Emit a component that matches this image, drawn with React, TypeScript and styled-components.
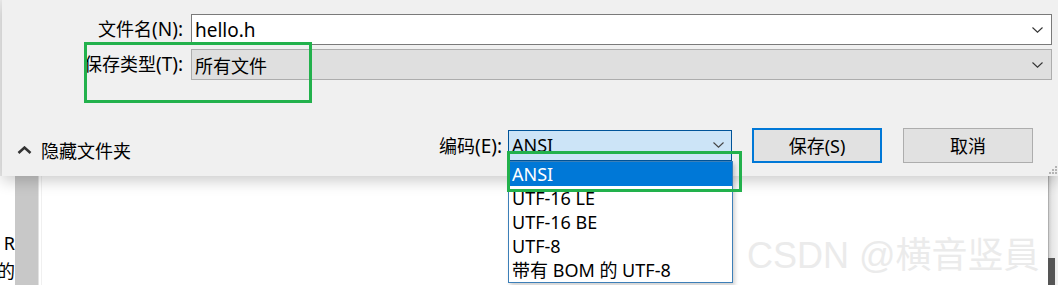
import React from 'react'
import styled, { createGlobalStyle } from 'styled-components'

// ---------- data ----------

const ENCODINGS = ['ANSI', 'UTF-16 LE', 'UTF-16 BE', 'UTF-8', '带有 BOM 的 UTF-8']

// ---------- global ----------

const GlobalStyle = createGlobalStyle`
  html, body { margin: 0; padding: 0; background: #ffffff; }
  body {
    font-family: "Noto Sans", "Noto Sans CJK SC", sans-serif;
    color: #000;
  }
  * { box-sizing: border-box; }
`

// ---------- layout ----------

const Screen = styled.div`
  position: relative;
  width: 1058px;
  height: 285px;
  overflow: hidden;
  background: #ebebeb;
  display: flex;
  flex-direction: column;
`

const Dialog = styled.div`
  position: relative;
  z-index: 2;
  margin-left: 2px;
  height: 183px;
  background: #f0f0f0;
  box-shadow: 0 5px 14px rgba(0, 0, 0, 0.2);
  padding: 14px 6px 0 0;
  display: flex;
  flex-direction: column;
`

const FieldGrid = styled.div`
  display: grid;
  grid-template-columns: 181px 1fr;
  column-gap: 8px;
  row-gap: 4px;
`

const Label = styled.label`
  font-size: 18px;
  line-height: 31px;
  text-align: right;
  white-space: nowrap;
`

// Latin runs render a touch larger than the CJK glyphs, as in YaHei UI
const Latin = styled.span`
  font-size: 19px;
`

const Combo = styled.div<{ $readonly?: boolean }>`
  height: 31px;
  display: flex;
  align-items: center;
  justify-content: space-between;
  padding: 0 8px 0 3px;
  font-size: 18px;
  background: ${(p) => (p.$readonly ? '#dfdfdf' : '#ffffff')};
  border: 1px solid ${(p) => (p.$readonly ? '#adadad' : '#7a7a7a')};
`

const BottomBar = styled.div`
  margin-top: 47px;
  display: flex;
  align-items: center;
  padding-right: 19px;
`

const HideToggle = styled.div`
  display: flex;
  align-items: center;
  gap: 9px;
  padding-left: 15px;
  margin-top: 10px;
  font-size: 18px;
`

const EncodingGroup = styled.div`
  margin-left: auto;
  display: flex;
  align-items: center;
  gap: 6px;
`

const EncodingLabel = styled.span`
  font-size: 18px;
`

const EncodingSelect = styled.div`
  position: relative;
  width: 224px;
  height: 31px;
  display: flex;
  align-items: center;
  justify-content: space-between;
  padding: 0 7px 0 3px;
  font-size: 18px;
  background: #cce4f7;
  border: 1px solid #005499;
`

const Buttons = styled.div`
  display: flex;
  gap: 21px;
  margin-left: 20px;
`

const Button = styled.button<{ $primary?: boolean }>`
  width: 130px;
  height: 35px;
  font-family: inherit;
  font-size: 18px;
  color: #000;
  background: #e1e1e1;
  border: ${(p) => (p.$primary ? '2px solid #0078d7' : '1px solid #adadad')};
  padding: 0;
`

// dropdown list hangs over the dialog edge
const DropList = styled.ul`
  position: absolute;
  left: -1px;
  top: 30px;
  width: 225px;
  margin: 0;
  padding: 0;
  list-style: none;
  background: #fff;
  border: 1px solid #3c7fb8;
  box-shadow: 2px 3px 4px rgba(0, 0, 0, 0.18);
`

const DropItem = styled.li<{ $active?: boolean }>`
  height: 24px;
  line-height: 24px;
  padding-left: 3px;
  font-size: 18px;
  white-space: nowrap;
  color: ${(p) => (p.$active ? '#fff' : '#000')};
  background: ${(p) => (p.$active ? '#0078d7' : 'transparent')};
`

const Grip = styled.svg`
  position: absolute;
  right: 0;
  bottom: 1px;
`

// ---------- background window ----------

const Backdrop = styled.div`
  flex: 1;
  display: flex;
  background: #fff;
`

const EdgeText = styled.div`
  width: 15px;
  overflow: hidden;
  padding-top: 53px;
  font-size: 18px;
  line-height: 28px;
  white-space: nowrap;
  direction: rtl;
`

const GutterBar = styled.div`
  width: 24px;
  background: #c8c8c8;
  border-right: 1px solid #e2e2e2;
`

const Page = styled.div`
  flex: 1;
  border-left: 1px solid #f0f0f0;
  margin-left: 2px;
`

const RightRail = styled.div`
  width: 10px;
  display: flex;
  flex-direction: column;
  background: linear-gradient(to right, #8e8e8e 0, #cfcfcf 1px, #e6e6e6 4px, #f2f2f2 100%);

  &::after {
    content: '';
    margin-top: auto;
    height: 27px;
    width: 7px;
    background: #555;
  }
`

// ---------- overlays ----------

const Highlight = styled.div<{ $x: number; $y: number; $w: number; $h: number }>`
  position: absolute;
  z-index: 5;
  left: ${(p) => p.$x}px;
  top: ${(p) => p.$y}px;
  width: ${(p) => p.$w}px;
  height: ${(p) => p.$h}px;
  border: 3px solid #22b14c;
`

const Watermark = styled.div`
  position: absolute;
  z-index: 1;
  left: 747px;
  top: 236px;
  font-family: "Liberation Sans", "Noto Sans CJK SC", sans-serif;
  font-size: 36px;
  line-height: 40px;
  color: #ebebeb;
  white-space: nowrap;
`

// ---------- icons ----------

const ChevronDown = ({ color = '#333' }: { color?: string }) => (
  <svg width="11" height="6" viewBox="0 0 11 6">
    <path d="M0.5 0.5 L5.5 5.2 L10.5 0.5" fill="none" stroke={color} strokeWidth="1.1" />
  </svg>
)

const ChevronUp = () => (
  <svg width="15" height="8" viewBox="0 0 15 8">
    <path d="M1.5 7 L7.5 1.6 L13.5 7" fill="none" stroke="#333" strokeWidth="2.6" />
  </svg>
)

export default function App() {
  return (
    <Screen>
      <GlobalStyle />
      <Dialog>
        <FieldGrid>
          <Label>
            文件名<Latin>(N):</Latin>
          </Label>
          <Combo>
            <Latin>hello.h</Latin>
            <ChevronDown />
          </Combo>
          <Label>
            保存类型<Latin>(T):</Latin>
          </Label>
          <Combo $readonly>
            <span>所有文件</span>
            <ChevronDown />
          </Combo>
        </FieldGrid>

        <BottomBar>
          <HideToggle>
            <ChevronUp />
            <span>隐藏文件夹</span>
          </HideToggle>
          <EncodingGroup>
            <EncodingLabel>
              编码<Latin>(E):</Latin>
            </EncodingLabel>
            <EncodingSelect>
              <span>ANSI</span>
              <ChevronDown color="#444" />
              <DropList>
                {ENCODINGS.map((enc, i) => (
                  <DropItem key={enc} $active={i === 0}>
                    {enc}
                  </DropItem>
                ))}
              </DropList>
            </EncodingSelect>
          </EncodingGroup>
          <Buttons>
            <Button $primary>保存(S)</Button>
            <Button>取消</Button>
          </Buttons>
        </BottomBar>

        <Grip width="12" height="12" viewBox="0 0 12 12">
          {[
            [9, 0],
            [6, 3],
            [9, 3],
            [3, 6],
            [6, 6],
            [9, 6],
          ].map(([x, y]) => (
            <rect key={`${x}-${y}`} x={x} y={y + 3} width="2" height="2" fill="#b4b4b4" />
          ))}
        </Grip>
      </Dialog>

      <Backdrop>
        <EdgeText>
          R<br />的
        </EdgeText>
        <GutterBar />
        <Page />
        <RightRail />
      </Backdrop>

      <Watermark>CSDN @横音竖員</Watermark>
      <Highlight $x={84} $y={42} $w={228} $h={61} />
      <Highlight $x={507} $y={151} $w={235} $h={41} />
    </Screen>
  )
}
